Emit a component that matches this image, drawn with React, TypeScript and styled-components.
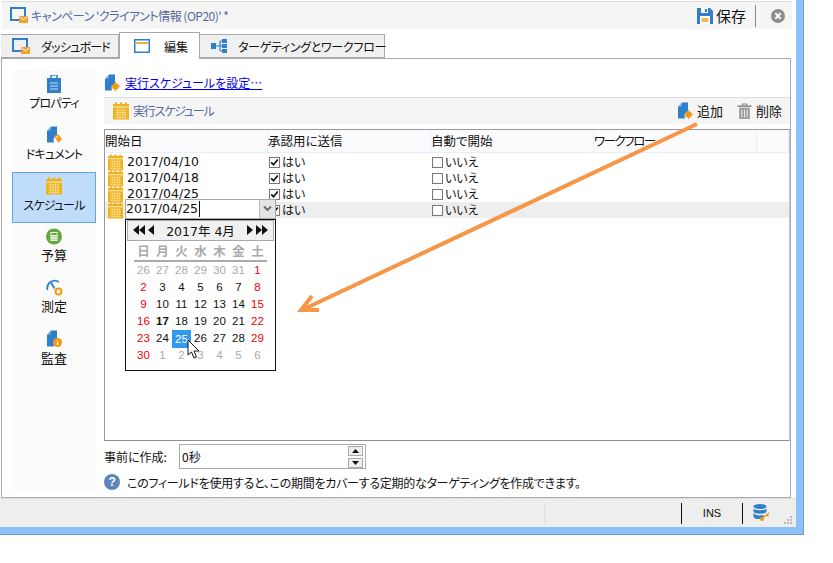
import React from "react";
import styled, { createGlobalStyle } from "styled-components";

const Global = createGlobalStyle`
  html, body { margin: 0; padding: 0; background: #fff; }
  body { font-family: "Noto Sans CJK JP", "Noto Sans", sans-serif; font-size: 12px; color: #111; font-feature-settings: "palt"; }
`;

const Win = styled.div`
  position: relative; box-sizing: border-box; width: 804px; height: 535px; overflow: hidden;
  background: #8cc2f7; border-right: 1px solid #6c9fd0; border-bottom: 1px solid #6c9fd0;
  padding: 0 7px 7px 0;
`;
const Inner = styled.div`
  height: 527px; background: #fff; display: flex; flex-direction: column; overflow: hidden;
`;
const TopLine = styled.div`height: 1px; margin: 1px 4px 0 2px; background: #dcdcdc;`;
const TitleBar = styled.div`
  height: 27px; margin: 0 4px 0 2px; background: #f5f5f5; display: flex; align-items: center;
  padding-left: 8px; gap: 3px;
`;
const TitleText = styled.span`color: #56689c; font-size: 12px; letter-spacing: -0.5px; flex: 1; white-space: nowrap;`;
const SaveBtn = styled.span`display: flex; align-items: center; gap: 3px; font-size: 15px; color: #111; line-height: 1;`;
const VBar = styled.span`width: 1px; height: 22px; background: #888; margin: 0 12px 0 6px;`;
const CloseDot = styled.span`display: flex; margin-right: 7px;`;
const Tabs = styled.div`display: flex; align-items: flex-end; height: 26px; margin: 3px 0 0 1px; position: relative; z-index: 1;`;
const Tab = styled.div<{ $active?: boolean; $w: number; $track?: number }>`
  box-sizing: border-box; width: ${(p) => p.$w}px; height: ${(p) => (p.$active ? 27 : 24)}px;
  margin-bottom: ${(p) => (p.$active ? -1 : 0)}px;
  background: ${(p) => (p.$active ? "#fff" : "#f0f0f0")};
  border: 1px solid #aaa; border-bottom: ${(p) => (p.$active ? "none" : "1px solid #aaa")};
  border-left: ${(p) => (p.$active ? "1px solid #aaa" : "none")};
  display: flex; align-items: center; gap: ${(p) => (p.$active ? 14 : 11)}px;
  padding-left: ${(p) => (p.$active ? 14 : 11)}px; font-size: 12px; white-space: nowrap;
  letter-spacing: ${(p) => p.$track ?? 0}px;
  svg { flex: none; }
`;
const Panel = styled.div`
  box-sizing: border-box; width: 790px; height: 440px; margin-left: 1px; border: 1px solid #aaa;
  display: flex; gap: 8px; padding: 11px 0 6px 10px; background: #fff;
`;
const Side = styled.div`width: 84px; background: #fbfbfb; display: flex; flex-direction: column; flex: none;`;
const SideItem = styled.div<{ $on?: boolean }>`
  box-sizing: border-box; height: 51px; flex: none; display: flex; flex-direction: column; align-items: center;
  padding-top: 5px; gap: 1px; line-height: 17px; color: #111;
  ${(p) => (p.$on ? "background:#bfdcfa;border:1px solid #62a6e8;padding-top:4px;" : "")}
`;
const SideLabel = styled.span<{ $kana?: boolean }>`
  font-size: ${(p) => (p.$kana ? 12 : 13)}px; letter-spacing: ${(p) => (p.$kana ? -0.8 : 0)}px;
`;
const Main = styled.div`flex: 1; min-width: 0; display: flex; flex-direction: column;`;
const LinkRow = styled.div`height: 27px; display: flex; align-items: flex-start; gap: 5px; padding-top: 4px; box-sizing: border-box;`;
const LinkA = styled.a`color: #0000ee; text-decoration: underline; font-size: 12px; line-height: 18px;`;
const Section = styled.div`
  box-sizing: border-box; height: 27px; background: #f5f5f5; border-top: 1px solid #ddd; display: flex; align-items: center;
  padding: 0 8px 0 8px; gap: 3px;
`;
const SectionTitle = styled.span`color: #56689c; flex: 1; font-size: 12px; letter-spacing: -1.2px;`;
const Act = styled.span`display: flex; align-items: center; gap: 4px; margin-left: 11px; font-size: 13px;`;
const TableBox = styled.div`
  box-sizing: border-box; height: 313px; margin-top: 5px; border: 1px solid #999; border-right-color: #c8c8c8; position: relative;
  border-bottom-color: #8f8f9c;
`;
const HeadRow = styled.div`
  display: grid; grid-template-columns: 163px 163px 163px 163px 1fr; height: 23px; background: #fbfbfd;
  border-bottom: 1px solid #e3effa; box-sizing: border-box;
`;
const HeadCell = styled.div<{ $kana?: boolean }>`
  border-right: 1px solid #e3effa; display: flex; align-items: center; font-size: 12.5px; line-height: 1; padding-top: 1px;
  letter-spacing: ${(p) => (p.$kana ? -1.5 : 0)}px;
`;
const Row = styled.div<{ $on?: boolean }>`
  display: grid; grid-template-columns: 163px 163px 163px 163px 1fr; height: 16px; align-items: center;
  background: ${(p) => (p.$on ? "#eeeeee" : "#fff")};
`;
const DateCell = styled.div`display: flex; align-items: center; gap: 3px; padding-left: 2px; font-family: "DejaVu Sans", sans-serif; font-size: 12.5px; line-height: 16px;`;
const CheckCell = styled.div`display: flex; align-items: center; gap: 2px; font-size: 12px; padding-left: 1px; line-height: 16px;`;
const Box = styled.span`
  box-sizing: border-box; width: 11px; height: 11px; border: 1px solid #777; background: #fff; display: flex; flex: none;
`;
const Rows = styled.div`margin-top: 1px;`;
const Editor = styled.div`
  position: absolute; left: 20px; top: 69px; width: 151px; height: 20px; box-sizing: border-box; border: 1px solid #aaa; background: #fff;
  display: flex; align-items: center; font-family: "DejaVu Sans", sans-serif; font-size: 12.5px; z-index: 2;
`;
const EditorText = styled.span`border-right: 1px solid #111; line-height: 16px; padding-right: 1px; flex: none;`;
const Drop = styled.span`margin-left: auto; width: 15px; height: 18px; background: #e4e4e4; border-left: 1px solid #bbb; display: flex; align-items: center; justify-content: center;`;
const Cal = styled.div`
  position: absolute; left: 20px; top: 89px; box-sizing: border-box; width: 151px; height: 152px; border: 1px solid #111; background: #fff; z-index: 2;
  display: flex; flex-direction: column; align-items: center;
`;
const CalNav = styled.div`
  box-sizing: border-box; width: 147px; height: 21px; background: #f0f0f0; border: 1px solid #aaa; display: flex; align-items: center;
  justify-content: space-between; padding: 0 5px; font-size: 12.5px; color: #111; font-family: "DejaVu Sans", "Noto Sans CJK JP", sans-serif;
`;
const NavIcons = styled.span`display: flex; gap: 3px; align-items: center;`;
const DoubleTri = styled.span`display: flex; gap: 0;`;
const Grid7 = styled.div`display: grid; grid-template-columns: repeat(7, 19px); width: 133px;`;
const DayHead = styled(Grid7)`border-bottom: 2px solid #aaa; height: 19px; align-items: center;`;
const DH = styled.span`text-align: center; color: #aaa; font-size: 12.5px; font-weight: 700; line-height: 17px;`;
const Days = styled(Grid7)`grid-auto-rows: 17px;`;
const Day = styled.span<{ $c: string; $sel?: boolean; $b?: boolean }>`
  display: flex; align-items: center; justify-content: center; font-family: "Liberation Sans", sans-serif; font-size: 11.5px;
  color: ${(p) => p.$c}; font-weight: ${(p) => (p.$b ? 700 : 400)};
  ${(p) => (p.$sel ? "background:#3399ee;color:#fff;height:18px;" : "")}
`;
const Bottom = styled.div`height: 25px; margin-top: 3px; display: flex; align-items: center; font-size: 12px;`;
const BottomLabel = styled.span`width: 75px; flex: none;`;
const Spin = styled.div`
  box-sizing: border-box; width: 187px; height: 25px; border: 1px solid #aaa; display: flex; align-items: center; padding: 0 2px; background: #fff;
`;
const SpinVal = styled.span`flex: 1;`;
const SpinBtns = styled.span`display: flex; flex-direction: column; gap: 2px;`;
const SpinBtn = styled.span`box-sizing: border-box; width: 15px; height: 10px; background: #eee; border: 1px solid #aaa; display: flex; align-items: center; justify-content: center;`;
const Help = styled.div`display: flex; align-items: center; gap: 7px; height: 18px; margin-top: 4px; font-size: 12px; letter-spacing: -0.27px; white-space: nowrap;`;
const HelpIcon = styled.span`width: 16px; height: 16px; border-radius: 50%; background: #5c86ba; color: #fff; font: 700 12px/16px "Liberation Sans", sans-serif; text-align: center; flex: none;`;
const Status = styled.div`
  height: 29px; background: #eeeeee; border-top: 1px solid #e2e2e2; box-sizing: border-box; display: flex; align-items: center; position: relative;
`;
const Sep = styled.span<{ $dark?: boolean; $w: number }>`
  height: 21px; width: ${(p) => p.$w}px; flex: none; box-sizing: border-box; margin-top: 1px;
  border-right: 1px solid ${(p) => (p.$dark ? "#111" : "#e0e0e0")};
`;
const Ins = styled.span`width: 60px; text-align: center; font-family: "Liberation Sans", sans-serif; font-size: 11px; flex: none;`;
const DbWrap = styled.span`display: flex; margin-left: 10px;`;
const Grip = styled.svg`position: absolute; right: 4px; bottom: 2px;`;
const Overlay = styled.svg`position: absolute; left: 0; top: 0; z-index: 5; pointer-events: none;`;

const Calendar = ({ s = 18 }: { s?: number }) => (
  <svg width={s} height={s} viewBox="0 0 18 18" style={{ flex: "none" }}>
    <rect x="1" y="2" width="16" height="15.5" fill="#eeb21c" />
    <rect x="3" y="0.5" width="2" height="3.5" fill="#eeb21c" /><rect x="8" y="0.5" width="2" height="3.5" fill="#eeb21c" /><rect x="13" y="0.5" width="2" height="3.5" fill="#eeb21c" />
    <path d="M1 5h16" stroke="#fff" strokeWidth="0.8" />
    <path d="M3.5 8h11M3.5 10.5h11M3.5 13h11M3.5 15.5h11M5.5 6.5v10M8 6.5v10M10.5 6.5v10M13 6.5v10" stroke="#f8dc90" strokeWidth="0.8" />
  </svg>
);
const DocBase = ({ children }: { children?: React.ReactNode }) => (
  <svg width="16" height="18" viewBox="0 0 16 18" style={{ flex: "none" }}>
    <path d="M5 0.5h6v9a5 5 0 0 0-3 7H1V5z" fill="#2f7fca" />
    <path d="M1 4.5L4.5 1v3.5z" fill="#8fbce6" />
    {children}
  </svg>
);
const DocAdd = () => (
  <DocBase><circle cx="11.5" cy="12.5" r="3.3" fill="#f0980f" /><path d="M11.5 7.8v9.4M6.8 12.5h9.4" stroke="#f0980f" strokeWidth="1" strokeDasharray="1.3 6.8 1.3" /></DocBase>
);
const Monitor = () => (
  <svg width="18" height="17" viewBox="0 0 18 17" style={{ flex: "none" }}>
    <path d="M1 1h14v12H1z" fill="none" stroke="#2f7fca" strokeWidth="2" />
    <rect x="9" y="9" width="9" height="7" fill="#f0a030" />
    <path d="M9.5 9.8l4 3 4-3" fill="none" stroke="#fff" strokeWidth="1" />
  </svg>
);
const IconEdit = () => (
  <svg width="16" height="14" viewBox="0 0 16 14"><rect x="0.75" y="0.75" width="14.5" height="12.5" fill="#fff" stroke="#2f7fca" strokeWidth="1.5" /><rect x="2" y="3" width="12" height="2" fill="#f0b030" /></svg>
);
const IconFlow = () => (
  <svg width="16" height="14" viewBox="0 0 16 14"><path d="M0 4h5v6H0zM11 0h5v4h-5zM11 5h5v4h-5zM11 10h5v4h-5z" fill="#2f7fca" /><path d="M5 7h4M9 2h2M9 12h2M9 2v10M9 7h2" stroke="#2f7fca" strokeWidth="1.2" fill="none" /></svg>
);
const IconProp = () => (
  <svg width="16" height="18" viewBox="0 0 16 18"><rect x="1" y="3" width="14" height="15" fill="#2f7fca" /><rect x="5" y="0" width="6" height="5" fill="none" stroke="#2f7fca" strokeWidth="1.5" /><path d="M4 8h8M4 11h8M4 14h8" stroke="#cfe3f6" strokeWidth="1.2" /></svg>
);
const IconDoc = () => (
  <DocBase><path d="M8 10l4-2 4 5-3.5 4z" fill="#f09a20" /><circle cx="10.8" cy="10.7" r="0.8" fill="#fff" /></DocBase>
);
const IconBudget = () => (
  <svg width="16" height="17" viewBox="0 0 16 17"><circle cx="8" cy="8.5" r="8" fill="#64a83a" /><rect x="4.5" y="4" width="7" height="9" fill="#fff" /><rect x="5.3" y="5" width="5.4" height="2" fill="#64a83a" /><path d="M5.3 8.5h5.4M5.3 10h5.4M5.3 11.5h5.4" stroke="#64a83a" strokeWidth="0.8" strokeDasharray="1.2 0.9" /></svg>
);
const IconMeasure = () => (
  <svg width="17" height="17" viewBox="0 0 17 17"><path d="M1.5 11A7.500 7.500 0 0 1 13 3" fill="none" stroke="#2f7fca" strokeWidth="1.8" /><path d="M5 3.5l3.5 6" stroke="#2f7fca" strokeWidth="1.8" /><circle cx="12.5" cy="12.5" r="3" fill="#fff" stroke="#f0980f" strokeWidth="2" /></svg>
);
const IconAudit = () => (
  <DocBase><circle cx="11.5" cy="12.5" r="4.5" fill="#f0980f" /><path d="M11.5 10v.8M11.5 12v3" stroke="#fff" strokeWidth="1.3" /></DocBase>
);
const Trash = () => (
  <svg width="15" height="16" viewBox="0 0 14 15"><path d="M0.5 3h13" stroke="#8a8a8a" strokeWidth="1.5" /><path d="M5 3V1h4v2" fill="none" stroke="#8a8a8a" /><path d="M2 4.5h10V15H2z" fill="#9a9a9a" /><path d="M4.5 6v7.5M7 6v7.5M9.5 6v7.5" stroke="#e8e8e8" /></svg>
);
const Floppy = () => (
  <svg width="16" height="16" viewBox="0 0 16 16"><path d="M0 0h13l3 3v13H0z" fill="#2f7fca" /><rect x="4" y="0" width="7" height="5" fill="#fff" /><rect x="8" y="1" width="2" height="3" fill="#2f7fca" /><rect x="3" y="8" width="10" height="8" fill="#fff" /><path d="M4.5 11h7M4.5 13h7" stroke="#f0a030" strokeWidth="1.3" /></svg>
);
const CloseIcon = () => (
  <svg width="14" height="14" viewBox="0 0 14 14"><circle cx="7" cy="7" r="7" fill="#8c8c8c" /><path d="M4.3 4.3l5.4 5.4M9.7 4.3l-5.4 5.4" stroke="#fff" strokeWidth="2" /></svg>
);
const Tick = () => (
  <svg width="9" height="9" viewBox="0 0 9 9"><path d="M1.2 4.3l2.3 2.5 4.3-5.3" fill="none" stroke="#111" strokeWidth="1.7" /></svg>
);
const Chev = () => (
  <svg width="9" height="7" viewBox="0 0 9 7"><path d="M1 1.5l3.500 3.500L8 1.500" fill="none" stroke="#666" strokeWidth="1.8" /></svg>
);
const Tri = ({ dir }: { dir: "l" | "r" }) => (
  <svg width="6" height="10" viewBox="0 0 6 10"><path d={dir === "l" ? "M6 0v10L0 5z" : "M0 0v10l6-5z"} fill="#111" /></svg>
);
const Spinner = ({ up }: { up?: boolean }) => (
  <svg width="7" height="4" viewBox="0 0 7 4"><path d={up ? "M0 4h7L3.5 0z" : "M0 0h7L3.5 4z"} fill="#111" /></svg>
);
const DB = () => (
  <svg width="17" height="18" viewBox="0 0 17 18"><ellipse cx="7" cy="2.5" rx="6.5" ry="2.5" fill="#2f7fca" /><path d="M0.5 4v3.5c0 3 13 3 13 0V4c0 3-13 3-13 0z" fill="#2f7fca" /><path d="M0.5 9v3.5c0 3 8 3.3 10 1.5V11c-4 1-8 .5-10-2z" fill="#2f7fca" /><circle cx="9" cy="15" r="2" fill="#f0980f" /><path d="M10 14l6-5M14 11l1.5 1.5" stroke="#f0980f" strokeWidth="1.5" /></svg>
);

const G = "#aaaaaa"; const K = "#111111"; const R = "#ee0000";
type D = [string, string, boolean?, boolean?];
const weeks: D[][] = [
  [["26",G],["27",G],["28",G],["29",G],["30",G],["31",G],["1",R]],
  [["2",R],["3",K],["4",K],["5",K],["6",K],["7",K],["8",R]],
  [["9",R],["10",K],["11",K],["12",K],["13",K],["14",K],["15",R]],
  [["16",R],["17",K,false,true],["18",K],["19",K],["20",K],["21",K],["22",R]],
  [["23",R],["24",K],["25",K,true],["26",K],["27",K],["28",K],["29",R]],
  [["30",R],["1",G],["2",G],["3",G],["4",G],["5",G],["6",G]],
];
const rows = ["2017/04/10", "2017/04/18", "2017/04/25", ""];

export default function App() {
  return (
    <>
      <Global />
      <Win>
        <Inner>
          <TopLine />
          <TitleBar>
            <Monitor />
            <TitleText>キャンペーン 'クライアント情報 (OP20)' *</TitleText>
            <SaveBtn><Floppy />保存</SaveBtn>
            <VBar />
            <CloseDot><CloseIcon /></CloseDot>
          </TitleBar>
          <Tabs>
            <Tab $w={118} $track={-0.8}><Monitor />ダッシュボード</Tab>
            <Tab $w={81} $active><IconEdit />編集</Tab>
            <Tab $w={185} $track={-0.3}><IconFlow />ターゲティングとワークフロー</Tab>
          </Tabs>
          <Panel>
            <Side>
              <SideItem><IconProp /><SideLabel $kana>プロパティ</SideLabel></SideItem>
              <SideItem><IconDoc /><SideLabel $kana>ドキュメント</SideLabel></SideItem>
              <SideItem $on><Calendar /><SideLabel $kana>スケジュール</SideLabel></SideItem>
              <SideItem><IconBudget /><SideLabel>予算</SideLabel></SideItem>
              <SideItem><IconMeasure /><SideLabel>測定</SideLabel></SideItem>
              <SideItem><IconAudit /><SideLabel>監査</SideLabel></SideItem>
            </Side>
            <Main>
              <LinkRow><DocAdd /><LinkA href="#">実行スケジュールを設定…</LinkA></LinkRow>
              <Section>
                <Calendar />
                <SectionTitle>実行スケジュール</SectionTitle>
                <Act><DocAdd />追加</Act>
                <Act><Trash />削除</Act>
              </Section>
              <TableBox>
                <HeadRow>
                  <HeadCell>開始日</HeadCell><HeadCell>承認用に送信</HeadCell><HeadCell>自動で開始</HeadCell><HeadCell $kana>ワークフロー</HeadCell><HeadCell />
                </HeadRow>
                <Rows>
                  {rows.map((r, i) => (
                    <Row key={i} $on={i === 3}>
                      <DateCell><Calendar s={17} />{r}</DateCell>
                      <CheckCell><Box><Tick /></Box>はい</CheckCell>
                      <CheckCell><Box />いいえ</CheckCell>
                    </Row>
                  ))}
                </Rows>
                <Editor><EditorText>2017/04/25</EditorText><Drop><Chev /></Drop></Editor>
                <Cal>
                  <CalNav>
                    <NavIcons><DoubleTri><Tri dir="l" /><Tri dir="l" /></DoubleTri><Tri dir="l" /></NavIcons>
                    <span>2017年 4月</span>
                    <NavIcons><Tri dir="r" /><DoubleTri><Tri dir="r" /><Tri dir="r" /></DoubleTri></NavIcons>
                  </CalNav>
                  <DayHead>{"日月火水木金土".split("").map((d) => <DH key={d}>{d}</DH>)}</DayHead>
                  <Days>
                    {weeks.flat().map((d, i) => <Day key={i} $c={d[1]} $sel={d[2]} $b={d[3]}>{d[0]}</Day>)}
                  </Days>
                </Cal>
              </TableBox>
              <Bottom>
                <BottomLabel>事前に作成:</BottomLabel>
                <Spin>
                  <SpinVal>0秒</SpinVal>
                  <SpinBtns><SpinBtn><Spinner up /></SpinBtn><SpinBtn><Spinner /></SpinBtn></SpinBtns>
                </Spin>
              </Bottom>
              <Help><HelpIcon>?</HelpIcon>このフィールドを使用すると、この期間をカバーする定期的なターゲティングを作成できます。</Help>
            </Main>
          </Panel>
          <Status>
            <Sep $w={545} />
            <Sep $w={137} $dark />
            <Ins>INS</Ins>
            <Sep $w={1} $dark />
            <DbWrap><DB /></DbWrap>
            <Grip width="9" height="9" viewBox="0 0 9 9"><path d="M7 0h2v2H7zM4 3h2v2H4zM7 3h2v2H7zM1 6h2v2H1zM4 6h2v2H4zM7 6h2v2H7z" fill="#bbb" /></Grip>
          </Status>
        </Inner>
        <Overlay width="804" height="535" viewBox="0 0 804 535">
          <path d="M697 124L304 309" stroke="#f79646" strokeWidth="4" fill="none" />
          <path d="M312 296L301 310L319 310" stroke="#f79646" strokeWidth="4" fill="none" />
          <path d="M188 340v15l3.5-3 2.5 6 2.5-1-2.500-6h5z" fill="#fff" stroke="#111" strokeWidth="1" />
        </Overlay>
      </Win>
    </>
  );
}
